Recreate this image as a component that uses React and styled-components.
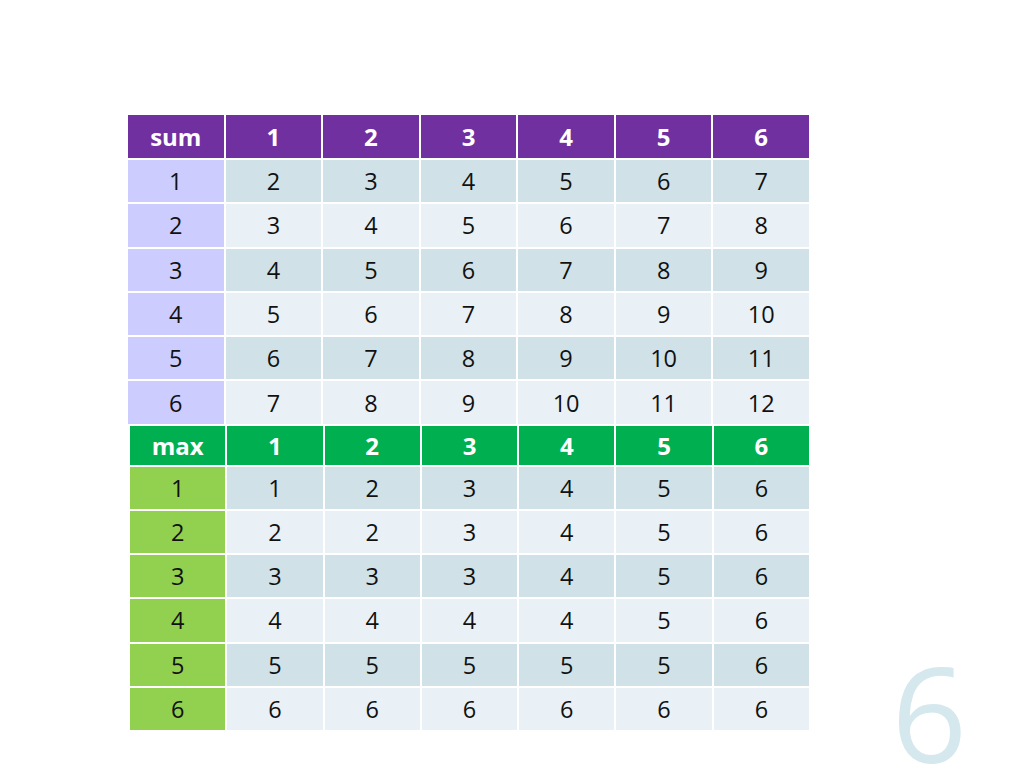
import React from "react";
import styled, { createGlobalStyle } from "styled-components";

const Global = createGlobalStyle`
  html, body { margin: 0; padding: 0; background: #ffffff; }
  body { font-family: "Open Sans", "Noto Sans", sans-serif; }
`;

const Slide = styled.div`
  width: 1024px;
  height: 768px;
  overflow: hidden;
  display: flex;
  background: #ffffff;
`;

const Tables = styled.div`
  display: flex;
  flex-direction: column;
  gap: 2px;
  padding-top: 115px;
  padding-left: 128px;
`;

const Grid = styled.div`
  display: grid;
  grid-template-columns: repeat(7, 1fr);
  grid-template-rows: ${(p) => p.$head}px repeat(6, ${(p) => p.$row}px);
  gap: 2px;
  width: ${(p) => p.$width}px;
  margin-left: ${(p) => p.$offset}px;
`;

const Cell = styled.div`
  display: flex;
  align-items: center;
  justify-content: center;
  font-size: 23.5px;
  color: #111111;
  background: ${(p) => p.$bg};
`;

const HeadCell = styled(Cell)`
  font-weight: 700;
  font-size: 24px;
  color: #ffffff;
`;

const PageNum = styled.div`
  margin-left: auto;
  margin-right: 57px;
  align-self: flex-end;
  font-size: 132px;
  line-height: 0.8;
  margin-bottom: 2px;
  color: #d4e8ee;
  font-family: "Open Sans", "Noto Sans", sans-serif;
`;

const ROW_ODD = "#d0e1e7";
const ROW_EVEN = "#e9f1f6";

function Table({ label, op, headBg, sideBg, head, row, width, offset }) {
  const n = [1, 2, 3, 4, 5, 6];
  return (
    <Grid $head={head} $row={row} $width={width} $offset={offset}>
      <HeadCell $bg={headBg}>{label}</HeadCell>
      {n.map((c) => (
        <HeadCell key={c} $bg={headBg}>{c}</HeadCell>
      ))}
      {n.map((r) => (
        <React.Fragment key={r}>
          <Cell $bg={sideBg}>{r}</Cell>
          {n.map((c) => (
            <Cell key={c} $bg={r % 2 === 1 ? ROW_ODD : ROW_EVEN}>
              {op(r, c)}
            </Cell>
          ))}
        </React.Fragment>
      ))}
    </Grid>
  );
}

export default function App() {
  return (
    <Slide>
      <Global />
      <Tables>
        <Table
          label="sum"
          op={(a, b) => a + b}
          headBg="#7030a0"
          sideBg="#ccccff"
          head={43}
          row={42.3}
          width={681}
          offset={0}
        />
        <Table
          label="max"
          op={(a, b) => Math.max(a, b)}
          headBg="#00b050"
          sideBg="#92d050"
          head={39}
          row={42.2}
          width={679}
          offset={2}
        />
      </Tables>
      <PageNum>6</PageNum>
    </Slide>
  );
}
